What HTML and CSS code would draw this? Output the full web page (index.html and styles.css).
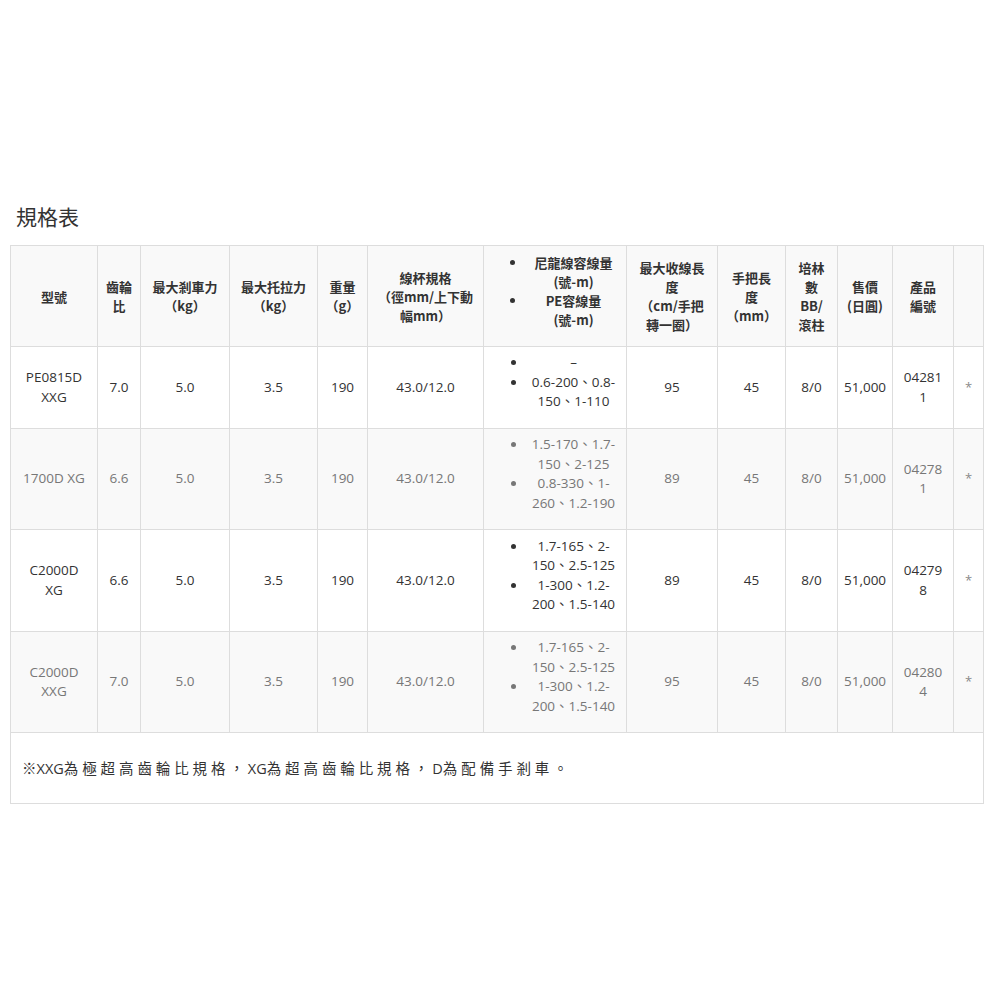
FILE: index.html
```html
<!DOCTYPE html>
<html lang="zh-Hant">
<head>
<meta charset="utf-8">
<title>規格表</title>
<link rel="stylesheet" href="styles.css">
</head>
<body>
<div class="page">
  <h2 class="title">規格表</h2>
  <table class="spec">
    <colgroup>
      <col class="c-model"><col class="c-ratio"><col class="c-drag"><col class="c-drag2"><col class="c-weight"><col class="c-spool"><col class="c-line"><col class="c-retrieve"><col class="c-handle"><col class="c-bearing"><col class="c-price"><col class="c-code"><col class="c-mark">
    </colgroup>
    <thead>
      <tr class="row-head">
        <th>型號</th>
        <th>齒輪<br>比</th>
        <th>最大剎車力<br>（kg）</th>
        <th>最大托拉力<br>（kg）</th>
        <th>重量<br>（g）</th>
        <th>線杯規格<br>（徑mm/上下動<br>幅mm）</th>
        <th>
          <ul class="lines">
            <li>尼龍線容線量<br>(號-m)</li>
            <li>PE容線量<br>(號-m)</li>
          </ul>
        </th>
        <th>最大收線長<br>度<br>（cm/手把<br>轉一圈）</th>
        <th>手把長<br>度<br>（mm）</th>
        <th>培林<br>數<br>BB/<br>滾柱</th>
        <th>售價<br>(日圓)</th>
        <th>產品<br>編號</th>
        <th></th>
      </tr>
    </thead>
    <tbody>
      <tr class="row-a h82">
        <td>PE0815D<br>XXG</td>
        <td>7.0</td>
        <td>5.0</td>
        <td>3.5</td>
        <td>190</td>
        <td>43.0/12.0</td>
        <td>
          <ul class="lines">
            <li>–</li>
            <li>0.6-200、0.8-<br>150、1-110</li>
          </ul>
        </td>
        <td>95</td>
        <td>45</td>
        <td>8/0</td>
        <td>51,000</td>
        <td>04281<br>1</td>
        <td class="mark">*</td>
      </tr>
      <tr class="row-b h101">
        <td>1700D XG</td>
        <td>6.6</td>
        <td>5.0</td>
        <td>3.5</td>
        <td>190</td>
        <td>43.0/12.0</td>
        <td>
          <ul class="lines">
            <li>1.5-170、1.7-<br>150、2-125</li>
            <li>0.8-330、1-<br>260、1.2-190</li>
          </ul>
        </td>
        <td>89</td>
        <td>45</td>
        <td>8/0</td>
        <td>51,000</td>
        <td>04278<br>1</td>
        <td class="mark">*</td>
      </tr>
      <tr class="row-a h102">
        <td>C2000D<br>XG</td>
        <td>6.6</td>
        <td>5.0</td>
        <td>3.5</td>
        <td>190</td>
        <td>43.0/12.0</td>
        <td>
          <ul class="lines">
            <li>1.7-165、2-<br>150、2.5-125</li>
            <li>1-300、1.2-<br>200、1.5-140</li>
          </ul>
        </td>
        <td>89</td>
        <td>45</td>
        <td>8/0</td>
        <td>51,000</td>
        <td>04279<br>8</td>
        <td class="mark">*</td>
      </tr>
      <tr class="row-b h101">
        <td>C2000D<br>XXG</td>
        <td>7.0</td>
        <td>5.0</td>
        <td>3.5</td>
        <td>190</td>
        <td>43.0/12.0</td>
        <td>
          <ul class="lines">
            <li>1.7-165、2-<br>150、2.5-125</li>
            <li>1-300、1.2-<br>200、1.5-140</li>
          </ul>
        </td>
        <td>95</td>
        <td>45</td>
        <td>8/0</td>
        <td>51,000</td>
        <td>04280<br>4</td>
        <td class="mark">*</td>
      </tr>
      <tr class="row-foot">
        <td colspan="13" class="note"><span class="ref">※</span><span class="lat">XXG</span>為極超高齒輪比規格，<span class="lat">XG</span>為超高齒輪比規格，<span class="lat">D</span>為配備手剎車。</td>
      </tr>
    </tbody>
  </table>
</div>
</body>
</html>
```

FILE: styles.css
```css
html, body {
  margin: 0;
  padding: 0;
  background: #ffffff;
}

body {
  font-family: "Open Sans", "Noto Sans CJK TC", sans-serif;
  color: #333333;
}

.page {
  padding: 201px 17px 0 10px;
}

.title {
  margin: 0 0 14px 6px;
  font-family: "Noto Sans CJK TC", sans-serif;
  font-size: 21px;
  line-height: 30px;
  font-weight: 400;
  color: #333333;
}

.spec {
  width: 973px;
  table-layout: fixed;
  border-collapse: collapse;
  font-size: 13.5px;
  line-height: 19.5px;
}

.c-model { width: 87px; }
.c-ratio { width: 43px; }
.c-drag { width: 89px; }
.c-drag2 { width: 88px; }
.c-weight { width: 50px; }
.c-spool { width: 116px; }
.c-line { width: 143px; }
.c-retrieve { width: 91px; }
.c-handle { width: 68px; }
.c-bearing { width: 52px; }
.c-price { width: 55px; }
.c-code { width: 61px; }
.c-mark { width: 30px; }

.spec th,
.spec td {
  border: 1px solid #dddddd;
  padding: 6px 6px;
  text-align: center;
  vertical-align: middle;
}

.spec th {
  font-family: "Noto Sans CJK TC", sans-serif;
  font-size: 13px;
  font-weight: 700;
  line-height: 19px;
  color: #333333;
}

.row-head {
  height: 101px;
  background: #f9f9f9;
}

.h82 { height: 82px; }
.h101 { height: 101px; }
.h102 { height: 102px; }

.row-a {
  background: #ffffff;
  color: #333333;
}

.row-b {
  background: #f9f9f9;
  color: #777777;
}

.lines {
  margin: 0 0 10px 0;
  padding: 0 0 0 37px;
  list-style: disc outside;
}

.lines li {
  text-align: center;
}

.mark {
  color: #8a8a8a;
  font-size: 13px;
  padding-bottom: 12px;
}

.row-foot {
  height: 71px;
  background: #ffffff;
}

.spec td.note {
  text-align: left;
  padding-left: 11px;
  font-family: "Noto Sans CJK TC", sans-serif;
  font-size: 14.5px;
  letter-spacing: 3.9px;
  color: #333333;
}

.note .ref {
  letter-spacing: 0;
}

.note .lat {
  font-family: "Open Sans", sans-serif;
  letter-spacing: 0;
}
```
